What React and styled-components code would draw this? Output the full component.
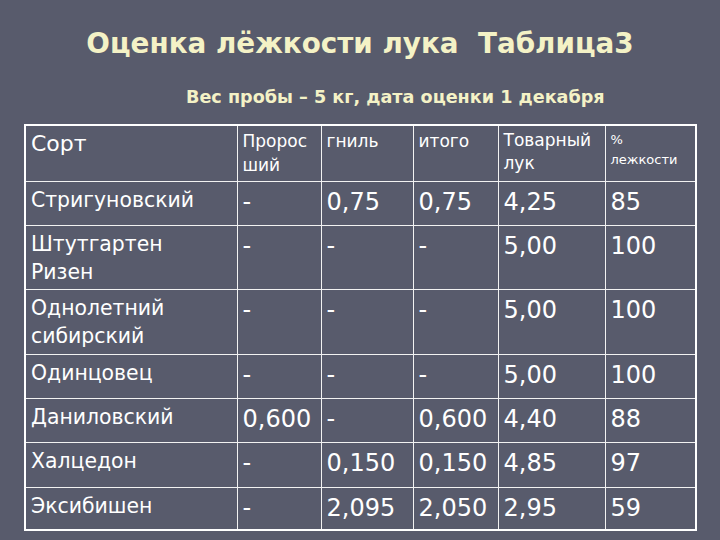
import React from "react";
import styled, { createGlobalStyle } from "styled-components";

const Global = createGlobalStyle`
  html, body { margin: 0; padding: 0; background: #585b6c; }
  #root { width: 720px; height: 540px; overflow: hidden; }
`;

const Slide = styled.div`
  width: 720px;
  height: 540px;
  box-sizing: border-box;
  background: #585b6c;
  display: flex;
  flex-direction: column;
  padding-top: 27px;
`;

const Title = styled.h1`
  margin: 0;
  text-align: center;
  font-family: "DejaVu Sans", sans-serif;
  font-weight: bold;
  font-size: 27.8px;
  line-height: 34px;
  color: #f4f2c6;
  white-space: pre;
`;

const Subtitle = styled.h2`
  margin: 25px 0 0 0;
  padding-left: 186px;
  font-family: "DejaVu Sans", sans-serif;
  font-weight: bold;
  font-size: 17.6px;
  line-height: 22px;
  color: #f4f2c6;
`;

const TableWrap = styled.div`
  margin-top: 16px;
  padding-left: 24px;
`;

const Table = styled.table`
  border-collapse: collapse;
  table-layout: fixed;
  width: 671px;
  border: 2px solid #ffffff;
  font-family: "DejaVu Sans", Verdana, sans-serif;
  color: #ffffff;
`;

const Row = styled.tr`
  height: ${(p) => p.$h}px;
`;

const Cell = styled.td`
  border: 1px solid #f2f2f2;
  vertical-align: top;
  padding: ${(p) => p.$pt}px 4px 0 5px;
  font-size: ${(p) => p.$size}px;
  line-height: ${(p) => p.$lh}px;
  white-space: nowrap;
  overflow: hidden;
`;

const widths = [212, 84, 92, 85, 107, 91];

const heads = [
  { t: ["Сорт"], size: 22, lh: 28, pt: 4 },
  { t: ["Пророс", "ший"], size: 17, lh: 24, pt: 3 },
  { t: ["гниль"], size: 17, lh: 24, pt: 3 },
  { t: ["итого"], size: 17, lh: 24, pt: 3 },
  { t: ["Товарный", "лук"], size: 17, lh: 23, pt: 3 },
  { t: ["%", "лежкости"], size: 13, lh: 20, pt: 4 },
];

const rows = [
  { h: 44, name: ["Стригуновский"], v: ["-", "0,75", "0,75", "4,25", "85"] },
  { h: 64, name: ["Штутгартен", "Ризен"], v: ["-", "-", "-", "5,00", "100"] },
  { h: 65, name: ["Однолетний", "сибирский"], v: ["-", "-", "-", "5,00", "100"] },
  { h: 44, name: ["Одинцовец"], v: ["-", "-", "-", "5,00", "100"] },
  { h: 44, name: ["Даниловский"], v: ["0,600", "-", "0,600", "4,40", "88"] },
  { h: 45, name: ["Халцедон"], v: ["-", "0,150", "0,150", "4,85", "97"] },
  { h: 43, name: ["Эксибишен"], v: ["-", "2,095", "2,050", "2,95", "59"] },
];

const Lines = ({ lines }) =>
  lines.map((l, i) => (
    <React.Fragment key={i}>
      {i > 0 && <br />}
      {l}
    </React.Fragment>
  ));

export default function App() {
  return (
    <>
      <Global />
      <Slide>
        <Title>{"Оценка лёжкости лука  Таблица3"}</Title>
        <Subtitle>Вес пробы – 5 кг, дата оценки 1 декабря</Subtitle>
        <TableWrap>
          <Table>
            <colgroup>
              {widths.map((w, i) => (
                <col key={i} style={{ width: w }} />
              ))}
            </colgroup>
            <tbody>
              <Row $h={56}>
                {heads.map((c, i) => (
                  <Cell key={i} $pt={c.pt} $size={c.size} $lh={c.lh}>
                    <Lines lines={c.t} />
                  </Cell>
                ))}
              </Row>
              {rows.map((r, i) => (
                <Row key={i} $h={r.h}>
                  <Cell $pt={4} $size={20.4} $lh={28.5}>
                    <Lines lines={r.name} />
                  </Cell>
                  {r.v.map((v, j) => (
                    <Cell key={j} $pt={6} $size={24} $lh={28}>
                      {v}
                    </Cell>
                  ))}
                </Row>
              ))}
            </tbody>
          </Table>
        </TableWrap>
      </Slide>
    </>
  );
}
